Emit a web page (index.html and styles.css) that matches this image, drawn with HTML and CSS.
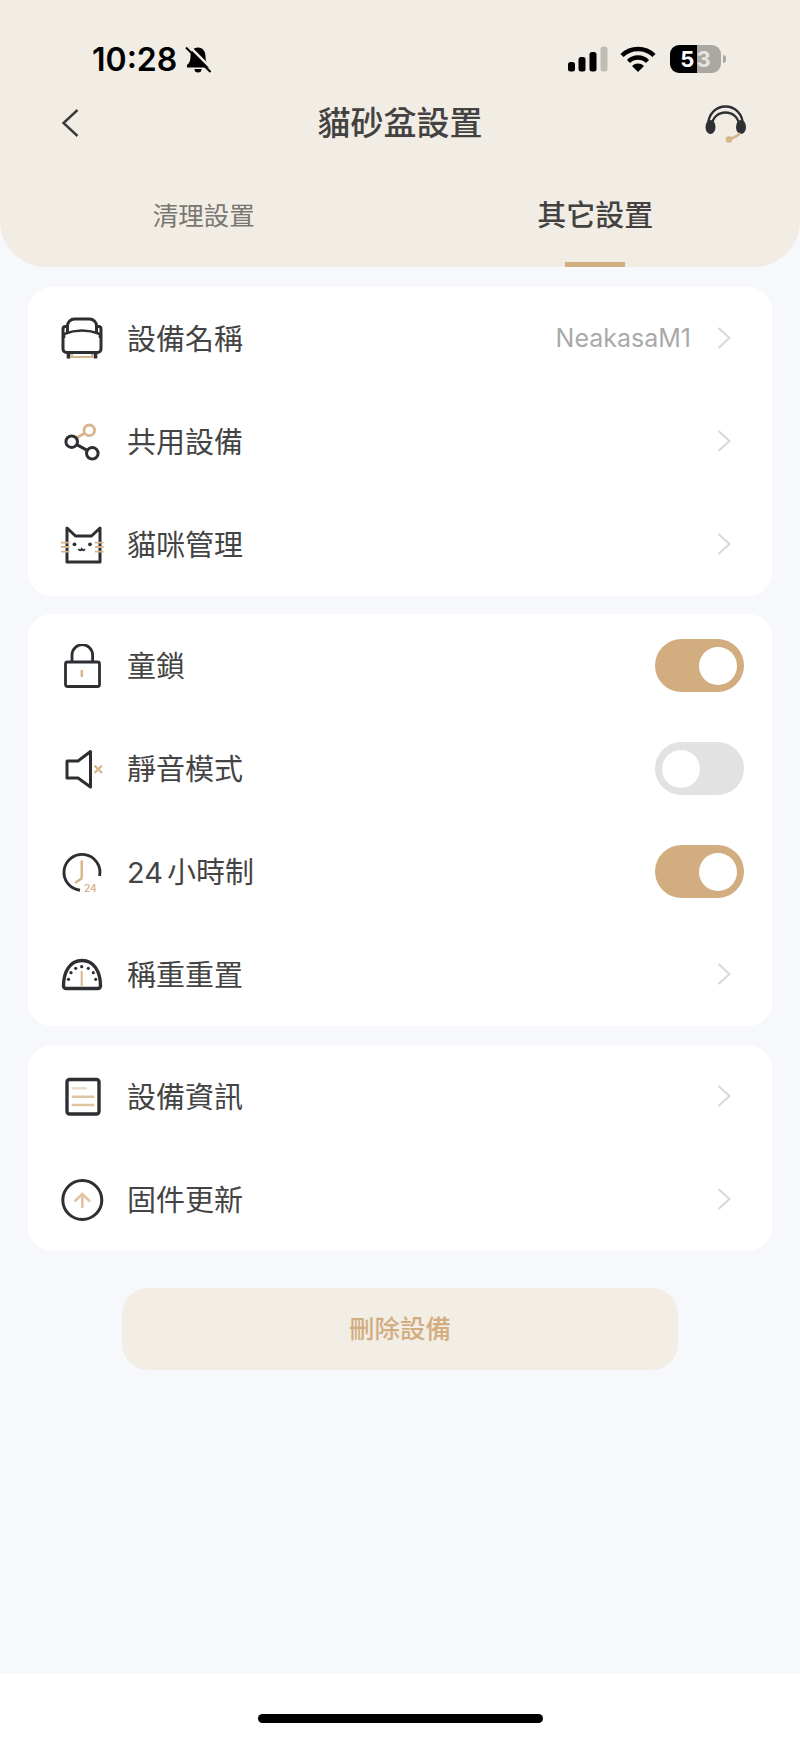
FILE: index.html
```html
<!DOCTYPE html>
<html lang="zh-Hant">
<head>
    <meta charset="UTF-8">
    <meta name="viewport" content="width=device-width, initial-scale=1.0">
    <title>貓砂盆設置</title>
    <link rel="stylesheet" href="styles.css">
</head>
<body>
    <svg class="defs" width="0" height="0">
        <symbol id="chev" viewBox="0 0 14 22"><path d="M1.5 1 L12.5 11 L1.5 21" fill="none" stroke="currentColor" stroke-width="2.2"/></symbol>
    </svg>
    <div id="page">
        <div id="header">
            <div class="status">
                <div class="status_left">
                    <span class="time">10:28</span>
                    <svg class="bell" width="26" height="27" viewBox="0 0 26 27">
                        <path d="M13 1.5c-5 0-7.5 4-7.5 9 0 4-1 6.5-3.5 8.5v2.5h22V19c-2.5-2-3.5-4.500-3.500-8.500 0-5-2.500-9-7.500-9z" fill="#000"/>
                        <path d="M9.5 23a3.5 3.5 0 0 0 7 0z" fill="#000"/>
                        <path d="M4 0 L28 24" stroke="#f1ede5" stroke-width="2.5"/>
                        <path d="M1 1.5 L25.5 26" stroke="#000" stroke-width="2"/>
                    </svg>
                </div>
                <div class="status_right">
                    <svg width="40" height="26" viewBox="0 0 40 26">
                        <rect x="0" y="16" width="7" height="9.5" rx="2.5" fill="#000"/>
                        <rect x="10.5" y="11" width="7" height="14.5" rx="2.5" fill="#000"/>
                        <rect x="21.5" y="6" width="7" height="19.5" rx="2.5" fill="#000"/>
                        <rect x="32.5" y="0.5" width="7" height="25" rx="2.5" fill="#c0bdb6"/>
                    </svg>
                    <svg class="wifi" width="36" height="26" viewBox="0 0 36 26">
                        <path d="M2 9.5A23 23 0 0 1 34 9.5" fill="none" stroke="#000" stroke-width="4.5"/>
                        <path d="M8.5 15.5A13.5 13.5 0 0 1 27.5 15.5" fill="none" stroke="#000" stroke-width="4.5"/>
                        <path d="M18 26 L12 20 A8.5 8.5 0 0 1 24 20 Z" fill="#000"/>
                    </svg>
                    <div class="battery">
                        <div class="battery_body"><span class="n1">5</span><span class="n2">3</span></div>
                        <div class="battery_cap"></div>
                    </div>
                </div>
            </div>
            <div class="nav">
                <div class="nav_btn">
                    <svg width="44" height="44" viewBox="0 0 44 44"><path d="M25.5 9 L11.5 22 L25.5 35" fill="none" stroke="#3a3a3a" stroke-width="2.4"/></svg>
                </div>
                <h1 class="title">貓砂盆設置</h1>
                <div class="nav_btn">
                    <svg width="44" height="44" viewBox="0 0 44 44">
                        <path d="M4 25C4 -1 39 -1 39 25" fill="none" stroke="#2e2f33" stroke-width="2.3"/>
                        <path d="M8 25C8 7 35 7 35 25" fill="none" stroke="#2e2f33" stroke-width="2.3"/>
                        <ellipse cx="6.5" cy="26" rx="5" ry="7" fill="#2e2f33"/>
                        <ellipse cx="37" cy="26" rx="5" ry="7" fill="#2e2f33"/>
                        <path d="M36 32Q33 36 26 37.5" fill="none" stroke="#d8b48c" stroke-width="2.8"/>
                        <circle cx="25" cy="38.5" r="3.3" fill="#d8b48c"/>
                    </svg>
                </div>
            </div>
            <div class="tabs">
                <div class="tab">清理設置</div>
                <div class="tab on">其它設置<i class="bar"></i></div>
            </div>
        </div>

        <div id="container">
            <ul class="card">
                <li class="row">
                    <svg class="ico" viewBox="0 0 44 44">
                        <path d="M12 36v4h20v-4" fill="none" stroke="#d8b48c" stroke-width="2"/>
                        <g fill="none" stroke="#2e2f33" stroke-linejoin="round" stroke-width="3">
                            <path d="M7.5 16V9a7 7 0 0 1 7-7h15a7 7 0 0 1 7 7v7"/>
                            <path d="M7.5 9.5H5.5a2.5 2.5 0 0 0-2.5 2.5v20a3.5 3.5 0 0 0 3.5 3.5h31a3.5 3.5 0 0 0 3.5-3.5V12a2.5 2.5 0 0 0-2.5-2.5h-2"/>
                            <path d="M4 21V17Q22 10 40 17V21" stroke-width="2.6"/>
                            <path d="M8.5 36v5.5M35.5 36v5.5" stroke-width="3.6"/>
                        </g>
                    </svg>
                    <span class="label">設備名稱</span>
                    <span class="val">NeakasaM1</span>
                    <svg class="chev"><use href="#chev"/></svg>
                </li>
                <li class="row">
                    <svg class="ico" viewBox="0 0 44 44">
                        <path d="M16.5 18 L25 13" stroke="#d8b48c" stroke-width="2.8"/>
                        <circle cx="29.3" cy="10.3" r="5.3" fill="none" stroke="#d8b48c" stroke-width="2.8"/>
                        <g fill="none" stroke="#2e2f33" stroke-width="3">
                            <circle cx="11.7" cy="21.7" r="5.8"/>
                            <circle cx="32.3" cy="33.3" r="5.8"/>
                            <path d="M16.8 24.6 L27.2 30.4"/>
                        </g>
                    </svg>
                    <span class="label">共用設備</span>
                    <svg class="chev"><use href="#chev"/></svg>
                </li>
                <li class="row">
                    <svg class="ico" viewBox="0 0 44 44">
                        <path d="M7 5 L15.5 13 H31.5 L40 5 V39 H7 Z" fill="none" stroke="#2e2f33" stroke-width="3" stroke-linejoin="round"/>
                        <path d="M1 19.7H9.5M1 24H9.5M1 28.7H9.5M35 19.7H43.5M35 24H43.5M35 28.7H43.5" stroke="#d8b48c" stroke-width="1.8"/>
                        <circle cx="14.5" cy="21.3" r="1.9" fill="#2e2f33"/>
                        <circle cx="30" cy="21.3" r="1.9" fill="#2e2f33"/>
                        <path d="M18.5 26q1.7 2.5 3.2 0q1.5 2.5 3.2 0" fill="none" stroke="#2e2f33" stroke-width="1.8"/>
                    </svg>
                    <span class="label">貓咪管理</span>
                    <svg class="chev"><use href="#chev"/></svg>
                </li>
            </ul>

            <ul class="card">
                <li class="row">
                    <svg class="ico" viewBox="0 0 44 44">
                        <g fill="none" stroke="#2e2f33" stroke-width="2.8" stroke-linejoin="round">
                            <rect x="5.5" y="18" width="34" height="24.5" rx="2"/>
                            <path d="M12 18V11a10.3 10.3 0 0 1 20.6 0V18"/>
                        </g>
                        <path d="M21.8 26V33" stroke="#d8b48c" stroke-width="2.4"/>
                    </svg>
                    <span class="label">童鎖</span>
                    <div class="sw on"><i></i></div>
                </li>
                <li class="row">
                    <svg class="ico" viewBox="0 0 44 44">
                        <path d="M30.5 4.5 L18 14 H7 V31 H18 L30.5 40 Z" fill="none" stroke="#2e2f33" stroke-width="3" stroke-linejoin="round"/>
                        <path d="M34.5 18.5 L42 26 M42 18.5 L34.5 26" stroke="#d8b48c" stroke-width="2.2"/>
                    </svg>
                    <span class="label">靜音模式</span>
                    <div class="sw"><i></i></div>
                </li>
                <li class="row">
                    <svg class="ico" viewBox="0 0 44 44">
                        <path d="M20 40.3A18 18 0 1 1 39.6 26" fill="none" stroke="#2e2f33" stroke-width="2.9"/>
                        <path d="M21.7 10.5V28.3L15 33" fill="none" stroke="#d8b48c" stroke-width="2.4"/>
                        <text class="ico_txt" x="24" y="41.5">24</text>
                    </svg>
                    <span class="label">24 小時制</span>
                    <div class="sw on"><i></i></div>
                </li>
                <li class="row">
                    <svg class="ico" viewBox="0 0 44 44">
                        <path d="M3.5 33C3.5 18 10.5 7.5 22 7.5S40.5 18 40.5 33A2.5 2.5 0 0 1 38 35.5H6A2.5 2.5 0 0 1 3.5 33Z" fill="none" stroke="#2e2f33" stroke-width="3.4" stroke-linejoin="round"/>
                        <g fill="#2e2f33">
                            <circle cx="8.5" cy="26.3" r="1.6"/>
                            <circle cx="11" cy="19.7" r="1.6"/>
                            <circle cx="15.7" cy="15.3" r="1.6"/>
                            <circle cx="21.7" cy="13.7" r="1.6"/>
                            <circle cx="28.3" cy="15.3" r="1.6"/>
                            <circle cx="33.3" cy="19.7" r="1.6"/>
                            <circle cx="35.7" cy="26.3" r="1.6"/>
                        </g>
                        <path d="M21.7 18V33" stroke="#d8b48c" stroke-width="2"/>
                    </svg>
                    <span class="label">稱重重置</span>
                    <svg class="chev"><use href="#chev"/></svg>
                </li>
            </ul>

            <ul class="card">
                <li class="row">
                    <svg class="ico" viewBox="0 0 44 44">
                        <rect x="7" y="4.5" width="32" height="34.5" rx="2.5" fill="none" stroke="#2e2f33" stroke-width="3.4"/>
                        <path d="M11.7 13.3H26.7" stroke="#eadcc8" stroke-width="2.4"/>
                        <path d="M11.7 21.7H34.3M11.7 30H34.3" stroke="#dfc4a2" stroke-width="2.6"/>
                    </svg>
                    <span class="label">設備資訊</span>
                    <svg class="chev"><use href="#chev"/></svg>
                </li>
                <li class="row">
                    <svg class="ico" viewBox="0 0 44 44">
                        <circle cx="22.3" cy="22" r="19.5" fill="none" stroke="#2e2f33" stroke-width="3"/>
                        <path d="M22.3 16V30M14.5 23.5L22.3 16L30 23.5" fill="none" stroke="#e0c4a4" stroke-width="2.6"/>
                    </svg>
                    <span class="label">固件更新</span>
                    <svg class="chev"><use href="#chev"/></svg>
                </li>
            </ul>

            <div class="del_btn">刪除設備</div>
        </div>

        <div id="footer"><i class="home_bar"></i></div>
    </div>
</body>
</html>
```

FILE: styles.css
```css
* {margin: 0; padding: 0; box-sizing: border-box;}
ul,li {list-style: none;}
i {display: block;}
body {font-family: Inter, "Noto Sans CJK TC", sans-serif; background-color: #f7f8fc;}
.defs {display: block; height: 0;}

#page {width: 800px; height: 1738px; display: flex; flex-direction: column;}

/* header */
#header {height: 267px; padding-top: 36px; background-color: #f1ede5; border-radius: 0 0 46px 46px;}

.status {height: 46px; padding: 0 74px 0 92px; display: flex; justify-content: space-between; align-items: center;}
.status_left {display: flex; align-items: center; gap: 8px;}
.time {font-size: 32px; font-weight: 600; color: #000;}
.status_right {display: flex; align-items: center; gap: 14px;}
.status_right .wifi {margin-left: -2px;}

.battery {display: flex; align-items: center; gap: 2px;}
.battery_body {width: 51px; height: 28px; border-radius: 9px; display: flex; justify-content: center; align-items: center; gap: 2px;
               background: linear-gradient(90deg, #000 53%, #aaa8a3 53%); font-size: 22px; font-weight: 700;}
.battery_body .n1 {color: #fff;}
.battery_body .n2 {color: #e6e4df;}
.battery_cap {width: 3px; height: 8px; border-radius: 0 3px 3px 0; background-color: #aaa8a3;}

.nav {height: 54px; margin-top: 14px; padding: 0 52px; display: flex; justify-content: space-between; align-items: center;}
.nav_btn {width: 44px; height: 44px;}
.title {font-size: 33px; font-weight: 500; color: #444240; padding-bottom: 4px;}

.tabs {height: 117px; padding: 46px 9px 0 8px; display: flex;}
.tab {flex: 1; display: flex; flex-direction: column; align-items: center; font-size: 25.5px; line-height: 40px; color: #7a7772;}
.tab.on {font-size: 29px; font-weight: 500; color: #444240;}
.tab .bar {width: 60px; height: 5px; margin-top: 26px; background-color: #d2ad80;}

/* list */
#container {flex: 1; padding: 20px 28px 0;}
.card {background-color: #fff; border-radius: 24px; margin-bottom: 18px;}
.card:nth-child(2) {margin-bottom: 19px;}
.row {height: 103px; padding: 0 28px 0 32px; display: flex; align-items: center;}
.ico {width: 44px; height: 44px; margin-right: 23px; flex-shrink: 0;}
.ico_txt {font-size: 10px; font-weight: 600; fill: #d8b48c;}
.label {flex: 1; padding-bottom: 4px; font-size: 29px; color: #444; word-spacing: -4px;}
.val {margin: 0 26px 2px 0; font-size: 25px; color: #aaa;}
.chev {width: 14px; height: 22px; margin: 0 13px 2px 0; color: #d9d9d9;}

.sw {width: 89px; height: 53px; padding: 0 7px; border-radius: 27px; background-color: #e2e2e2; display: flex; align-items: center;}
.sw i {width: 38px; height: 38px; border-radius: 50%; background-color: #fff;}
.sw.on {background-color: #d2ad80; justify-content: flex-end;}

.del_btn {width: 556px; height: 82px; margin: 37px auto 0; border-radius: 26px; background-color: #f2eee6;
          color: #d2ad80; font-size: 25.5px; font-weight: 500; line-height: 82px; text-align: center;}

/* footer */
#footer {height: 64px; padding-top: 40px; background-color: #fff;}
.home_bar {width: 285px; height: 9px; margin: 0 auto; border-radius: 5px; background-color: #000;}
```
